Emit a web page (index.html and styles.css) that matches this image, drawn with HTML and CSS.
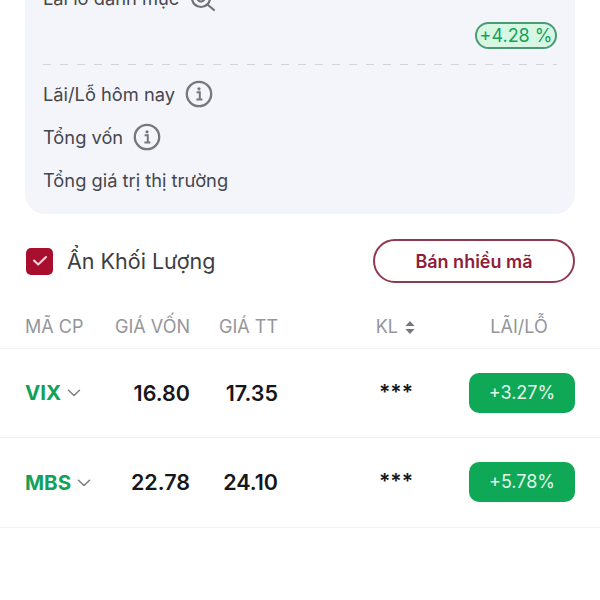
FILE: index.html
```html
<!DOCTYPE html>
<html lang="vi">
<head>
<meta charset="utf-8">
<title>Danh mục</title>
<link rel="stylesheet" href="styles.css">
</head>
<body>
<main class="page">
  <section class="card">
    <div class="title-row">
      <span class="label">Lãi lỗ danh mục</span>
      <svg class="eye" width="28" height="28" viewBox="0 0 28 28" fill="none" stroke="#6f7178" stroke-width="2.2" stroke-linecap="round"><circle cx="12" cy="12" r="9"/><circle cx="12" cy="12" r="3.5"/><path d="M19 19l6 5"/></svg>
    </div>
    <div class="total-row"><span class="pill">+4.28 %</span></div>
    <div class="dash"></div>
    <div class="stat stat-1"><span class="label">Lãi/Lỗ hôm nay</span>
      <svg class="info" width="28" height="28" viewBox="0 0 28 28" fill="none"><circle cx="14" cy="14" r="12.2" stroke="#75777d" stroke-width="2.3"/><circle cx="14" cy="8.8" r="1.6" fill="#75777d"/><path d="M11.6 12.2h3.2v7M11.4 19.4h6" stroke="#75777d" stroke-width="2"/></svg>
    </div>
    <div class="stat stat-2"><span class="label">Tổng vốn</span>
      <svg class="info" width="28" height="28" viewBox="0 0 28 28" fill="none"><circle cx="14" cy="14" r="12.2" stroke="#75777d" stroke-width="2.3"/><circle cx="14" cy="8.8" r="1.6" fill="#75777d"/><path d="M11.6 12.2h3.2v7M11.4 19.4h6" stroke="#75777d" stroke-width="2"/></svg>
    </div>
    <div class="stat stat-3"><span class="label">Tổng giá trị thị trường</span></div>
  </section>

  <section class="actions">
    <label class="check">
      <span class="box"><svg width="16" height="12" viewBox="0 0 16 12" fill="none" stroke="#f6dde2" stroke-width="2" stroke-linecap="round" stroke-linejoin="round"><path d="M2 5.5l4.2 4L14 2"/></svg></span>
      <span class="check-text">Ẩn Khối Lượng</span>
    </label>
    <button class="sell">Bán nhiều mã</button>
  </section>

  <section class="table">
    <div class="row head">
      <span class="cell-l">MÃ CP</span>
      <span class="cell-r">GIÁ VỐN</span>
      <span class="cell-r">GIÁ TT</span>
      <span class="cell-r kl">KL
        <svg width="10" height="13" viewBox="0 0 10 13" fill="#75777d"><path d="M5 0l4.6 5H.4zM5 13L.4 8h9.200z"/></svg>
      </span>
      <span class="cell-end">LÃI/LỖ</span>
    </div>
    <div class="row item item-first">
      <span class="sym">VIX <svg width="14" height="8" viewBox="0 0 14 8" fill="none" stroke="#7d7f85" stroke-width="1.5" stroke-linecap="round" stroke-linejoin="round"><path d="M1.500 1.200L7 6.500l5.500-5.300"/></svg></span>
      <span class="num">16.80</span>
      <span class="num">17.35</span>
      <span class="stars">***</span>
      <span class="badge">+3.27%</span>
    </div>
    <div class="row item">
      <span class="sym">MBS <svg width="14" height="8" viewBox="0 0 14 8" fill="none" stroke="#7d7f85" stroke-width="1.5" stroke-linecap="round" stroke-linejoin="round"><path d="M1.500 1.200L7 6.500l5.500-5.300"/></svg></span>
      <span class="num">22.78</span>
      <span class="num">24.10</span>
      <span class="stars">***</span>
      <span class="badge">+5.78%</span>
    </div>
  </section>
</main>
</body>
</html>
```

FILE: styles.css
```css
* { box-sizing: border-box; }
html, body { margin: 0; padding: 0; height: 100%; overflow: hidden; background: #fff; }
body { font-family: Inter, "Noto Sans", sans-serif; color: #3a3c42; }
.page { display: flex; flex-direction: column; }

.card {
  margin: -14px 25px 0;
  height: 228px;
  padding: 0 18px;
  background: #f4f4fb;
  border-radius: 0 0 20px 20px;
  display: flex;
  flex-direction: column;
}
.label { font-size: 18.3px; line-height: 24px; color: #45474d; white-space: nowrap; }
.title-row { display: flex; align-items: center; gap: 10px; height: 24px; }
.eye { margin-top: 4px; }
.total-row { display: flex; justify-content: flex-end; margin-top: 12px; }
.pill {
  width: 82px;
  height: 27px;
  border: 2px solid #4a9a74;
  border-radius: 14px;
  background: #d6f8e3;
  color: #16a05a;
  font-size: 18px;
  line-height: 23px;
  text-align: center;
  white-space: nowrap;
}
.dash {
  margin-top: 15px;
  height: 1px;
  background: repeating-linear-gradient(90deg, #d3d3d8 0 8px, transparent 8px 17px);
}
.stat { display: flex; align-items: center; gap: 10px; height: 28px; }
.stat-1 { margin-top: 15px; }
.stat-2 { margin-top: 15px; }
.stat-3 { margin-top: 15px; }

.actions {
  margin: 25px 25px 0;
  display: flex;
  justify-content: space-between;
  align-items: center;
  height: 44px;
}
.check { display: flex; align-items: center; gap: 14px; }
.box {
  width: 27px;
  height: 27px;
  margin-left: 1px;
  border-radius: 5px;
  background: #a80f2e;
  display: flex;
  align-items: center;
  justify-content: center;
}
.check-text { font-size: 21.5px; line-height: 28px; color: #3c3e44; white-space: nowrap; }
.sell {
  width: 202px;
  height: 44px;
  border: 2px solid #8f3a50;
  border-radius: 22px;
  background: #fff;
  color: #8f1d3a;
  font-family: inherit;
  font-size: 18px;
  font-weight: 600;
}

.table { margin-top: 25px; }
.row {
  display: grid;
  grid-template-columns: 85px 80px 88px 137px 160px;
  align-items: center;
  padding: 0 25px;
}
.head { height: 41px; padding-bottom: 4px; font-size: 18px; color: #94969b; border-bottom: 1px solid #f1f1f3; }
.cell-r { text-align: right; white-space: nowrap; }
.cell-end { justify-self: end; width: 106px; margin-right: 3px; text-align: center; }
.kl svg { margin-left: 2px; vertical-align: -1px; }
.item { height: 90px; border-bottom: 1px solid #f1f1f3; padding-bottom: 1px; }
.item-first { height: 89px; }
.sym { font-size: 20.5px; font-weight: 700; color: #12a15a; white-space: nowrap; }
.sym svg { margin-left: 1px; vertical-align: 3px; }
.num { font-size: 21.5px; font-weight: 600; color: #16171a; text-align: right; }
.stars { font-size: 21px; font-weight: 600; color: #16171a; text-align: right; padding-right: 2px; line-height: 22px; }
.badge {
  justify-self: end;
  width: 106px;
  height: 40px;
  border-radius: 10px;
  background: #0fa856;
  color: #e2f7ea;
  font-size: 18px;
  line-height: 40px;
  text-align: center;
}
```
